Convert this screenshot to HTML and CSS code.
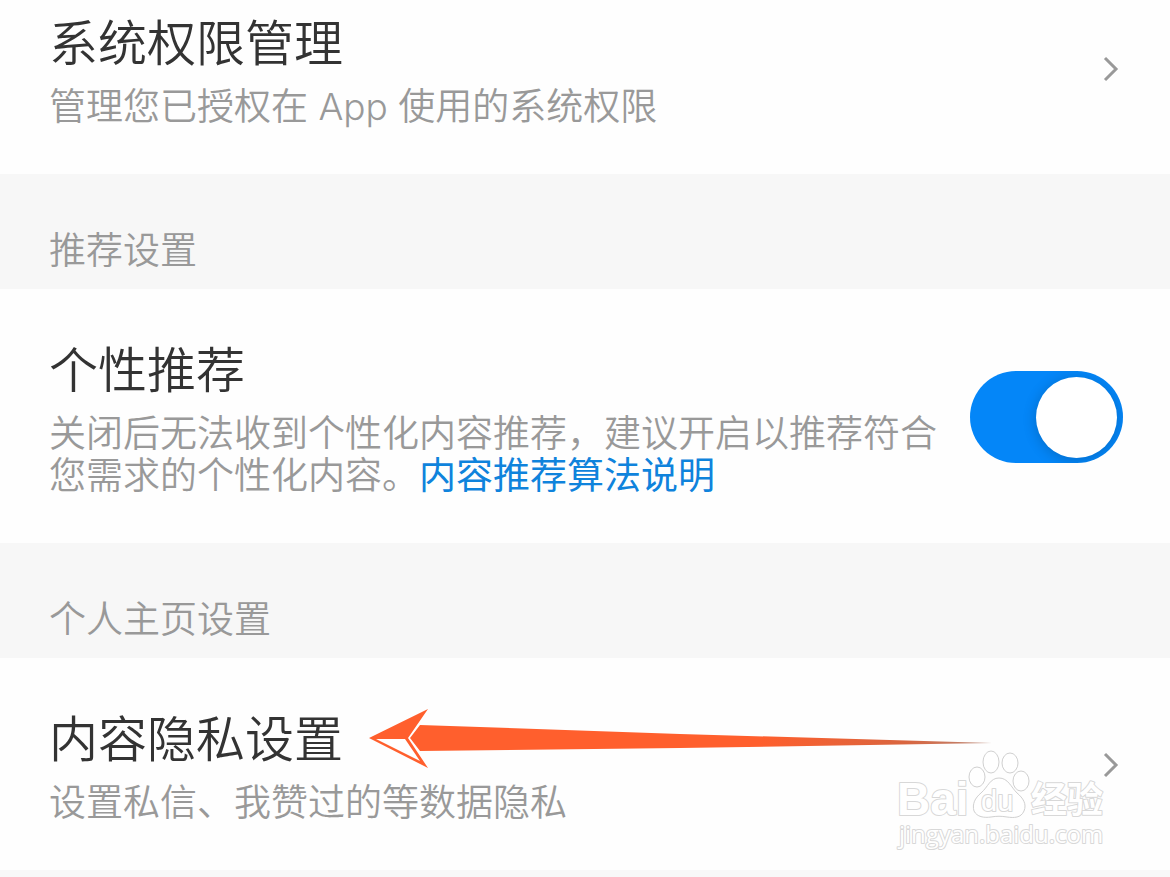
FILE: index.html
```html
<!DOCTYPE html>
<html lang="zh-CN">
<head>
  <meta charset="UTF-8">
  <title>隐私设置</title>
  <meta name="viewport" content="width=device-width, initial-scale=1.0">
  <link rel="stylesheet" href="styles.css">
</head>
<body>
  <main class="settings">
    <a href="#system" class="row row-first">
      <div class="row-text">
        <h2 class="row-title">系统权限管理</h2>
        <p class="row-desc">管理您已授权在 App 使用的系统权限</p>
      </div>
      <svg class="chevron" viewBox="0 0 20 28" aria-hidden="true">
        <path d="M2 3 L13 14 L2 25"/>
      </svg>
    </a>

    <h3 class="section-title">推荐设置</h3>

    <div class="row">
      <div class="row-text">
        <label class="row-title" for="recommend">个性推荐</label>
        <p class="row-desc">关闭后无法收到个性化内容推荐，建议开启以推荐符合您需求的个性化内容。<a href="#algorithm" class="link">内容推荐算法说明</a></p>
      </div>
      <input type="checkbox" id="recommend" class="switch" checked>
    </div>

    <h3 class="section-title">个人主页设置</h3>

    <a href="#privacy" class="row">
      <div class="row-text">
        <h2 class="row-title">内容隐私设置</h2>
        <p class="row-desc">设置私信、我赞过的等数据隐私</p>
      </div>
      <svg class="chevron" viewBox="0 0 20 28" aria-hidden="true">
        <path d="M2 3 L13 14 L2 25"/>
      </svg>

      <!-- Arrow -->
      <svg class="arrow" viewBox="0 0 626 60" aria-hidden="true">
        <defs>
          <linearGradient id="tail" x1="0" x2="1" y1="0" y2="0">
            <stop offset="0.6" stop-color="#ff5f2d"/>
            <stop offset="0.85" stop-color="#d9653f"/>
            <stop offset="1" stop-color="#b98a7a"/>
          </linearGradient>
        </defs>
        <path fill="url(#tail)" d="M52 16 L312 25 L624 34 L312 39 L52 42 L42 29 Z"/>
        <path fill="#ff5f2d" d="M1 29 L60 0 L40 29 L60 59 Z"/>
        <path fill="#fff" d="M8 30 L37 30 L52 52 Z"/>
      </svg>

      <!-- Watermark -->
      <svg class="watermark" viewBox="0 0 220 110" aria-hidden="true">
        <g class="outline">
          <text class="wm-logo" x="5" y="71">Bai</text>
          <ellipse cx="85" cy="33" rx="8" ry="10"/>
          <ellipse cx="99" cy="18" rx="8" ry="11"/>
          <ellipse cx="118" cy="19" rx="8" ry="10"/>
          <ellipse cx="129" cy="37" rx="8" ry="10"/>
          <path d="M107 34 C116 34 119 43 125 49 C131 54 135 60 132 67 C129 74 122 74 115 73 C109 72 105 72 99 73 C92 74 85 73 82 67 C80 60 83 54 89 49 C96 43 98 34 107 34 Z"/>
          <text class="wm-du" x="89" y="67">du</text>
          <text class="wm-cn" x="139" y="69">经验</text>
          <text class="wm-url" x="7" y="99">jingyan.baidu.com</text>
        </g>
      </svg>
    </a>
  </main>
</body>
</html>
```
FILE: styles.css
```css
body {
  margin: 0;
  background-color: #f8f8f8;
  color: #333;
  font-family: Inter, "Noto Sans CJK SC", sans-serif;
}

.row {
  position: relative;
  display: flex;
  align-items: center;
  gap: 32px;
  padding: 48px 47px 46px 49px;
  background-color: #fefefe;
  color: inherit;
  text-decoration: none;
}

.row-first {
  padding-top: 10px;
}

.row-text {
  flex: 1;
  padding-top: 4px;
}

.row-title {
  display: block;
  margin: 0 0 12px;
  font-size: 49px;
  font-weight: 350;
  line-height: 60px;
}

.row-desc {
  margin: 0;
  color: #999;
  font-size: 37px;
  font-weight: 350;
  line-height: 42px;
}

.link {
  color: #0f83dc;
  font-weight: 400;
  text-decoration: none;
}

.section-title {
  margin: 0;
  padding: 56px 49px 17px;
  background-color: #f7f7f7;
  color: #999;
  font-size: 37px;
  font-weight: 350;
  line-height: 42px;
}

.chevron {
  width: 20px;
  height: 28px;
  fill: none;
  stroke: #999;
  stroke-width: 3;
}

.switch {
  appearance: none;
  flex: none;
  display: flex;
  align-items: center;
  justify-content: flex-end;
  box-sizing: border-box;
  width: 153px;
  height: 92px;
  margin: 0;
  padding: 0 6px;
  border-radius: 46px;
  background-color: #0486f8;
  overflow: hidden;
  cursor: pointer;
}

.switch::before {
  content: "";
  width: 81px;
  height: 81px;
  border-radius: 50%;
  background-color: #fff;
  box-shadow: 0 2px 14px rgba(0, 0, 0, 0.2);
}

.switch:not(:checked) {
  justify-content: flex-start;
  background-color: #ddd;
}

.arrow {
  position: absolute;
  top: 51px;
  left: 368px;
  width: 626px;
  height: 60px;
}

.watermark {
  position: absolute;
  right: 58px;
  bottom: 16px;
  width: 220px;
  height: 110px;
}

.outline {
  fill: #fff;
  stroke: #d0d0d0;
  stroke-width: 1;
}

.outline text {
  stroke: #d8d8d8;
  stroke-width: 2;
  stroke-linejoin: round;
  paint-order: stroke;
}

.wm-logo,
.wm-du {
  font-family: "Liberation Sans", sans-serif;
  font-weight: 700;
}

.wm-logo {
  font-size: 46px;
}

.wm-du {
  font-size: 29px;
  font-weight: 400;
}

.wm-cn {
  font-family: "Noto Sans CJK SC", sans-serif;
  font-size: 36px;
  font-weight: 700;
}

.wm-url {
  font-family: "Open Sans", sans-serif;
  font-size: 24px;
}
```
